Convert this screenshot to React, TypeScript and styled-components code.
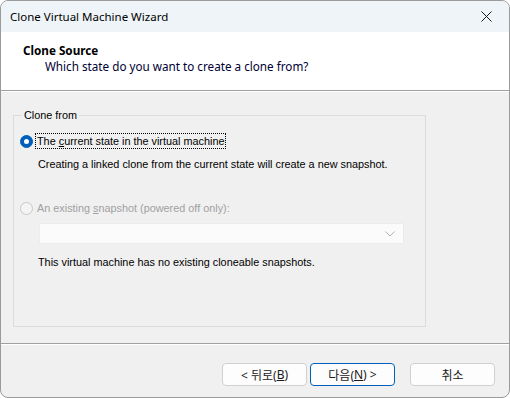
import React from 'react';
import styled, { createGlobalStyle } from 'styled-components';

const GlobalStyle = createGlobalStyle`
  html, body {
    margin: 0;
    padding: 0;
    background: #ffffff;
  }
  * {
    box-sizing: border-box;
  }
`;

const uiFont = `"Segoe UI", "Noto Sans", "Noto Sans CJK KR", sans-serif`;
const formFont = `Tahoma, "Liberation Sans", sans-serif`;

const Window = styled.div`
  width: 510px;
  height: 398px;
  display: flex;
  flex-direction: column;
  border: 1px solid #9a9a9a;
  border-radius: 8px;
  overflow: hidden;
  background: #f0f0f0;
  font-family: ${uiFont};
  color: #000000;
`;

const TitleBar = styled.div`
  height: 31px;
  flex: none;
  display: flex;
  align-items: center;
  justify-content: space-between;
  padding: 0 0 0 9px;
  background: #eef4f8;
  font-size: 11.5px;
`;

const CloseButton = styled.div`
  width: 46px;
  height: 31px;
  display: flex;
  align-items: center;
  justify-content: center;
`;

const Header = styled.div`
  height: 59px;
  flex: none;
  background: #ffffff;
  border-bottom: 1px solid #a0a0a0;
  padding: 10px 0 0 22px;
  font-size: 11.7px;
  line-height: 16px;
`;

const HeaderTitle = styled.div`
  font-weight: 700;
`;

const HeaderSub = styled.div`
  padding-left: 22px;
  color: #000033;
`;

const Body = styled.div`
  flex: 1;
  display: flex;
  flex-direction: column;
  padding: 15px 0 0 12px;
  border-top: 1px solid #ffffff;
  font-family: ${formFont};
  font-size: 10.85px;
`;

const GroupBox = styled.fieldset`
  width: 413px;
  height: 220px;
  margin: 0;
  padding: 0 0 0 6px;
  border: 1px solid #dcdcdc;
  border-radius: 0;
`;

const Legend = styled.legend`
  padding: 0 2px;
  margin-left: 2px;
  line-height: 16px;
`;

const RadioRow = styled.div<{ $disabled?: boolean; $top: number }>`
  display: flex;
  align-items: center;
  gap: 3px;
  height: 16px;
  margin-top: ${(p) => p.$top}px;
  color: ${(p) => (p.$disabled ? '#a0a0a0' : '#000000')};
`;

const RadioMark = styled.span<{ $checked?: boolean; $disabled?: boolean }>`
  width: 13px;
  height: 13px;
  border-radius: 50%;
  flex: none;
  display: inline-flex;
  align-items: center;
  justify-content: center;
  background: ${(p) => (p.$checked ? '#005fb8' : '#f4f4f4')};
  border: 1px solid ${(p) => (p.$checked ? '#005fb8' : p.$disabled ? '#c8c8c8' : '#8a8a8a')};

  &::after {
    content: '';
    display: ${(p) => (p.$checked ? 'block' : 'none')};
    width: 5px;
    height: 5px;
    border-radius: 50%;
    background: #ffffff;
  }
`;

const RadioLabel = styled.span<{ $focused?: boolean }>`
  padding: 0 1px;
  outline: ${(p) => (p.$focused ? '1px dotted #000000' : 'none')};
  line-height: 14px;
`;

const Description = styled.div<{ $top: number }>`
  margin-top: ${(p) => p.$top}px;
  padding-left: 18px;
  line-height: 14px;
`;

const Combo = styled.div`
  margin: 7px 0 0 19px;
  width: 365px;
  height: 21px;
  background: #fbfbfb;
  border: 1px solid #ececec;
  display: flex;
  align-items: center;
  justify-content: flex-end;
  padding-right: 8px;
`;

const Footer = styled.div`
  height: 54px;
  flex: none;
  border-top: 1px solid #a0a0a0;
  box-shadow: inset 0 1px 0 #ffffff;
  display: flex;
  justify-content: flex-end;
  align-items: flex-start;
  padding: 19px 14px 0 0;
`;

const Button = styled.button<{ $primary?: boolean; $gap?: number }>`
  width: 85px;
  height: 23px;
  margin-left: ${(p) => p.$gap ?? 0}px;
  border-radius: 4px;
  border: 1px solid ${(p) => (p.$primary ? '#005fb8' : '#d0d0d0')};
  background: #fdfdfd;
  font-family: ${uiFont};
  font-size: 12px;
  color: #1a1a1a;
  padding: 0;
  display: flex;
  align-items: center;
  justify-content: center;
`;

const Key = styled.span`
  text-decoration: underline;
`;

function App() {
  return (
    <>
      <GlobalStyle />
      <Window>
        <TitleBar>
          <span>Clone Virtual Machine Wizard</span>
          <CloseButton>
            <svg width="11" height="11" viewBox="0 0 11 11">
              <path d="M0.5 0.5 L10.5 10.5 M10.5 0.5 L0.5 10.5" stroke="#1a1a1a" strokeWidth="1" />
            </svg>
          </CloseButton>
        </TitleBar>
        <Header>
          <HeaderTitle>Clone Source</HeaderTitle>
          <HeaderSub>Which state do you want to create a clone from?</HeaderSub>
        </Header>
        <Body>
          <GroupBox>
            <Legend>Clone from</Legend>
            <RadioRow $top={10}>
              <RadioMark $checked />
              <RadioLabel $focused>The <Key>c</Key>urrent state in the virtual machine</RadioLabel>
            </RadioRow>
            <Description $top={8}>Creating a linked clone from the current state will create a new snapshot.</Description>
            <RadioRow $disabled $top={29}>
              <RadioMark $disabled />
              <RadioLabel>An existing <Key>s</Key>napshot (powered off only):</RadioLabel>
            </RadioRow>
            <Combo>
              <svg width="10" height="6" viewBox="0 0 10 6">
                <path d="M0.5 0.5 L5 5 L9.5 0.5" stroke="#b0b0b0" strokeWidth="1" fill="none" />
              </svg>
            </Combo>
            <Description $top={11}>This virtual machine has no existing cloneable snapshots.</Description>
          </GroupBox>
        </Body>
        <Footer>
          <Button>&lt; 뒤로(<Key>B</Key>)</Button>
          <Button $primary $gap={3}>다음(<Key>N</Key>) &gt;</Button>
          <Button $gap={15}>취소</Button>
        </Footer>
      </Window>
    </>
  );
}

export default App;
